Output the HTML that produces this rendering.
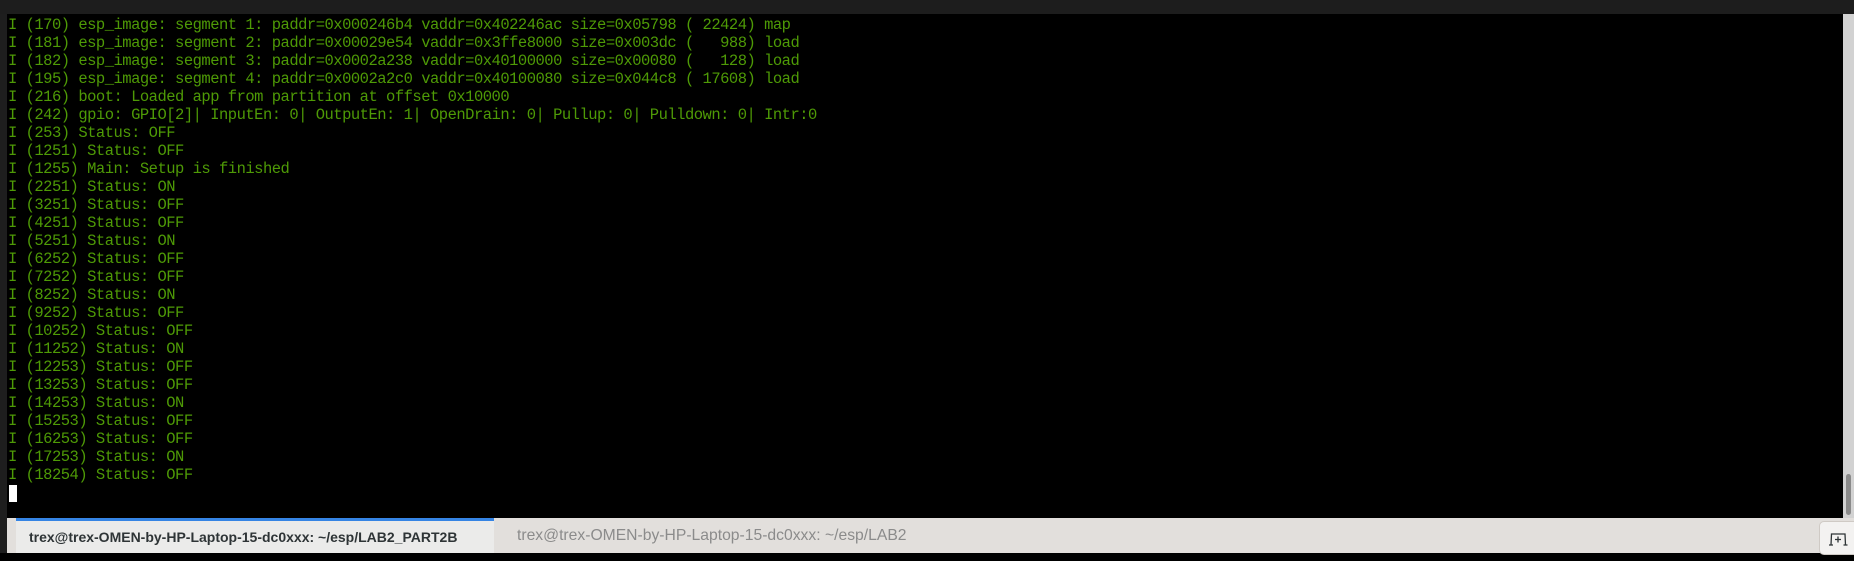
<!DOCTYPE html>
<html><head><meta charset="utf-8"><style>
html,body{margin:0;padding:0;width:1854px;height:553px;overflow:hidden;background:#000;}
#top{position:absolute;left:0;top:0;width:1854px;height:14px;background:#1d1d1d;}
#left{position:absolute;left:0;top:14px;width:7px;height:539px;background:#1e1e1e;}
#term{position:absolute;left:7px;top:14px;width:1836px;height:504px;background:#000;}
pre{position:absolute;left:8px;top:16px;margin:0;font-family:"Liberation Mono",monospace;font-size:15.5px;letter-spacing:-0.51px;line-height:18px;color:#4e9a06;white-space:pre;}
#cursor{position:absolute;left:9px;top:485px;width:8px;height:17px;background:#fff;}
#sb{position:absolute;left:1843px;top:14px;width:11px;height:504px;background:#d2d2d2;}
#thumb{position:absolute;left:1846px;top:474px;width:5px;height:41px;background:#8a8a8a;border-radius:3px;}
#tabs{position:absolute;left:7px;top:518px;width:1847px;height:35px;background:#e2dfdc;font-family:"Liberation Sans",sans-serif;}
#t1{position:absolute;left:9px;top:0;width:478px;height:35px;background:#ebebea;border-top:3px solid #3584e4;box-sizing:border-box;}
#t1 span{position:absolute;left:13px;top:8px;color:#2e3436;font-weight:bold;font-size:14px;}
#t2{position:absolute;left:510px;top:9px;color:#8b8b8b;font-size:15.7px;}
#nt{position:absolute;left:1812px;top:3px;width:40px;height:34px;background:#f3f2f1;border:1px solid #cfcac5;border-radius:5px;box-sizing:border-box;}
</style></head><body>
<div id="top"></div><div id="left"></div><div id="term"></div>
<pre>I (170) esp_image: segment 1: paddr=0x000246b4 vaddr=0x402246ac size=0x05798 ( 22424) map
I (181) esp_image: segment 2: paddr=0x00029e54 vaddr=0x3ffe8000 size=0x003dc (   988) load
I (182) esp_image: segment 3: paddr=0x0002a238 vaddr=0x40100000 size=0x00080 (   128) load
I (195) esp_image: segment 4: paddr=0x0002a2c0 vaddr=0x40100080 size=0x044c8 ( 17608) load
I (216) boot: Loaded app from partition at offset 0x10000
I (242) gpio: GPIO[2]| InputEn: 0| OutputEn: 1| OpenDrain: 0| Pullup: 0| Pulldown: 0| Intr:0
I (253) Status: OFF
I (1251) Status: OFF
I (1255) Main: Setup is finished
I (2251) Status: ON
I (3251) Status: OFF
I (4251) Status: OFF
I (5251) Status: ON
I (6252) Status: OFF
I (7252) Status: OFF
I (8252) Status: ON
I (9252) Status: OFF
I (10252) Status: OFF
I (11252) Status: ON
I (12253) Status: OFF
I (13253) Status: OFF
I (14253) Status: ON
I (15253) Status: OFF
I (16253) Status: OFF
I (17253) Status: ON
I (18254) Status: OFF</pre>
<div id="cursor"></div>
<div id="sb"></div><div id="thumb"></div>
<div id="tabs">
<div id="t1"><span>trex@trex-OMEN-by-HP-Laptop-15-dc0xxx: ~/esp/LAB2_PART2B</span></div>
<div id="t2">trex@trex-OMEN-by-HP-Laptop-15-dc0xxx: ~/esp/LAB2</div>
<div id="nt"><svg width="40" height="34" viewBox="0 0 40 34"><path d="M11 23 L11.5 12 L25 12 L25.5 23 M9 23 L13 23 M23.5 23 L27.5 23 M18 14.5 V20.5 M15 17.5 H21" stroke="#2e3436" stroke-width="1.3" fill="none"/></svg></div>
</div>
</body></html>
